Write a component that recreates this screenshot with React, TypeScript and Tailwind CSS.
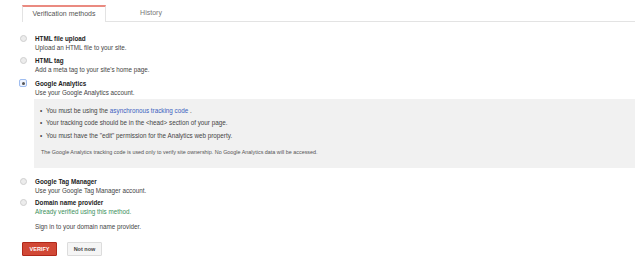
const font = { fontFamily: '"Liberation Sans", Arial, sans-serif' }

function Radio({ checked = false }: { checked?: boolean }) {
  if (checked) {
    return (
      <span className="flex h-[8px] w-[8px] items-center justify-center rounded-[2px] border border-[#9fbdf0] bg-[#eef3fd]">
        <span className="h-[3px] w-[3px] rounded-full bg-[#555]" />
      </span>
    )
  }
  return <span className="block h-[7px] w-[7px] rounded-full border border-[#cfcfcf] bg-[#ececec]" />
}

function Method({
  title,
  desc,
  checked,
  descClass = 'text-[#444]',
  className = '',
}: {
  title: string
  desc: React.ReactNode
  checked?: boolean
  descClass?: string
  className?: string
}) {
  return (
    <div className={`flex ${className}`}>
      <div className="flex h-[9px] w-[35px] items-center justify-end pr-[8px]">
        <Radio checked={checked} />
      </div>
      <div>
        <p className="text-[6.3px] font-bold leading-[9px] text-[#222]">{title}</p>
        <p className={`text-[6.3px] leading-[9px] ${descClass}`}>{desc}</p>
      </div>
    </div>
  )
}

export default function App() {
  return (
    <div className="h-[264px] w-[640px] bg-white pt-[5px]" style={font}>
      {/* Tabs */}
      <div className="ml-[22px] flex w-[613px] border-b border-[#e3e3e3]">
        <div className="-mb-px flex h-[17px] w-[84px] items-center justify-center border-x border-t-2 border-[#e3e3e3] border-t-[#ea8a80] bg-white text-[7px] text-[#555]">
          Verification methods
        </div>
        <div className="flex h-[16px] w-[90px] items-center justify-center text-[7px] text-[#777]">History</div>
      </div>

      <Method className="mt-[12px]" title="HTML file upload" desc="Upload an HTML file to your site." />
      <Method className="mt-[4.4px]" title="HTML tag" desc="Add a meta tag to your site's home page." />
      <Method className="mt-[4.4px]" title="Google Analytics" desc="Use your Google Analytics account." checked />

      {/* Analytics details */}
      <div className="ml-[34px] mt-[2px] h-[69px] w-[601px] bg-[#f1f1f1] pl-[6px] pt-[6px]">
        <ul className="text-[6.3px] leading-[12.5px] text-[#444]">
          <li className="flex">
            <span className="w-[6px]">•</span>
            <span>
              You must be using the <span className="text-[#3b5fc0]">asynchronous tracking code</span> .
            </span>
          </li>
          <li className="flex">
            <span className="w-[6px]">•</span>
            <span>Your tracking code should be in the &lt;head&gt; section of your page.</span>
          </li>
          <li className="flex">
            <span className="w-[6px]">•</span>
            <span>You must have the "edit" permission for the Analytics web property.</span>
          </li>
        </ul>
        <p className="mt-[6px] pl-[1px] text-[5.4px] leading-[8px] text-[#555]">
          The Google Analytics tracking code is used only to verify site ownership. No Google Analytics data will be
          accessed.
        </p>
      </div>

      <Method className="mt-[9.5px]" title="Google Tag Manager" desc="Use your Google Tag Manager account." />
      <Method
        className="mt-[3px]"
        title="Domain name provider"
        desc="Already verified using this method."
        descClass="text-[#3a8f5a]"
      />
      <p className="ml-[35px] mt-[5.5px] text-[6.3px] leading-[9px] text-[#444]">Sign in to your domain name provider.</p>

      {/* Actions */}
      <div className="ml-[22px] mt-[11.5px] flex gap-[10px]">
        <button className="flex h-[14px] w-[35px] items-center justify-center rounded-[1px] border border-[#b0281a] bg-[#d14836] text-[5.5px] font-bold text-white">
          VERIFY
        </button>
        <button className="flex h-[14px] w-[35px] items-center justify-center rounded-[1px] border border-[#dcdcdc] bg-[#f5f5f5] text-[5.5px] font-bold text-[#444]">
          Not now
        </button>
      </div>
    </div>
  )
}
